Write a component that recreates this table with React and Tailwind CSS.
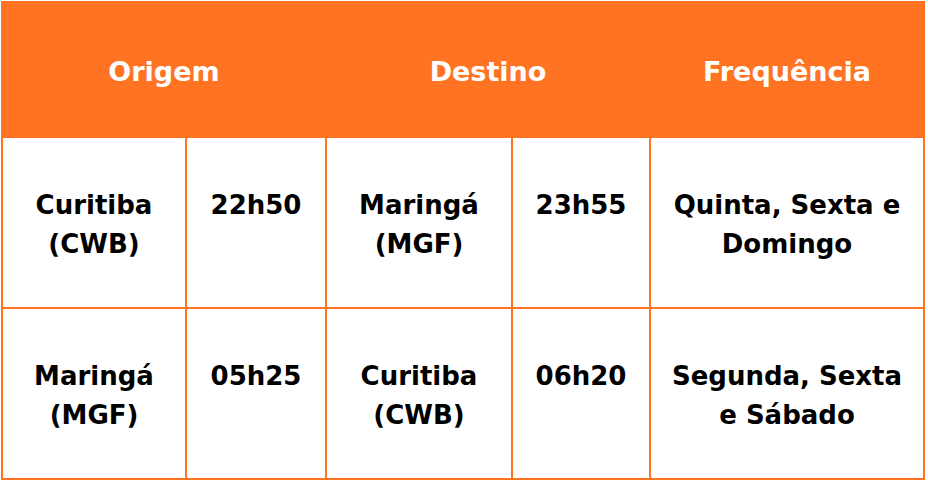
import React from "react";

const rows = [
  ["Curitiba (CWB)", "22h50", "Maringá (MGF)", "23h55", "Quinta, Sexta e Domingo"],
  ["Maringá (MGF)", "05h25", "Curitiba (CWB)", "06h20", "Segunda, Sexta e Sábado"],
];

const Cell = ({ children, wide }) => (
  <div className={`bg-white text-center text-black pt-[48px] ${wide ? "px-4" : "px-2"}`}>
    {children}
  </div>
);

export default function App() {
  return (
    <div
      className="w-[928px] h-[484px] bg-white pt-[1px] pl-[1px]"
      style={{ fontFamily: '"DejaVu Sans", Verdana, sans-serif' }}
    >
      <div className="grid w-[924px] grid-cols-[182px_138px_184px_136px_272px] grid-rows-[133px_169px_169px] gap-[2px] bg-[#ff7322] p-[2px] text-[26px] font-bold leading-[39px]">
        {/* header */}
        <div className="col-span-2 flex items-center justify-center pt-[3px] text-[27px] text-white">Origem</div>
        <div className="col-span-2 flex items-center justify-center pt-[3px] text-[27px] text-white">Destino</div>
        <div className="flex items-center justify-center pt-[3px] text-[27px] text-white">Frequência</div>

        {rows.map((r, i) => (
          <React.Fragment key={i}>
            <Cell>{r[0]}</Cell>
            <Cell>{r[1]}</Cell>
            <Cell>{r[2]}</Cell>
            <Cell>{r[3]}</Cell>
            <Cell wide>{r[4]}</Cell>
          </React.Fragment>
        ))}
      </div>
    </div>
  );
}
